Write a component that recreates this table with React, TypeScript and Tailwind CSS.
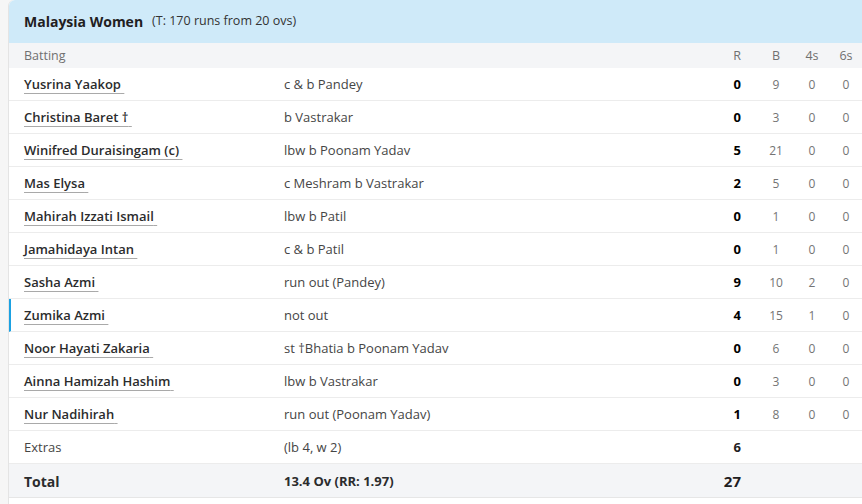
const batters = [
  { name: "Yusrina Yaakop", how: "c & b Pandey", r: 0, b: 9, f: 0, s: 0 },
  { name: "Christina Baret \u2020", how: "b Vastrakar", r: 0, b: 3, f: 0, s: 0 },
  { name: "Winifred Duraisingam (c)", how: "lbw b Poonam Yadav", r: 5, b: 21, f: 0, s: 0 },
  { name: "Mas Elysa", how: "c Meshram b Vastrakar", r: 2, b: 5, f: 0, s: 0 },
  { name: "Mahirah Izzati Ismail", how: "lbw b Patil", r: 0, b: 1, f: 0, s: 0 },
  { name: "Jamahidaya Intan", how: "c & b Patil", r: 0, b: 1, f: 0, s: 0 },
  { name: "Sasha Azmi", how: "run out (Pandey)", r: 9, b: 10, f: 2, s: 0 },
  { name: "Zumika Azmi", how: "not out", r: 4, b: 15, f: 1, s: 0, active: true },
  { name: "Noor Hayati Zakaria", how: "st \u2020Bhatia b Poonam Yadav", r: 0, b: 6, f: 0, s: 0 },
  { name: "Ainna Hamizah Hashim", how: "lbw b Vastrakar", r: 0, b: 3, f: 0, s: 0 },
  { name: "Nur Nadihirah", how: "run out (Poonam Yadav)", r: 1, b: 8, f: 0, s: 0 },
];

export default function App() {
  return (
    <div
      className="h-[504px] w-[862px] overflow-hidden bg-[#f6f6f6] pl-2 text-[13px] text-[#2b2c2d]"
      style={{ fontFamily: '"Open Sans", "Noto Sans", sans-serif' }}
    >
      <div className="h-full rounded-tl-md border-l border-[#e4e4e4] bg-white">
        <div className="flex h-[43px] items-center rounded-tl-md bg-[#cfeaf9] pl-[15px]">
          <span className="text-[14px] font-bold text-[#1f2021]">Malaysia Women</span>
          <span className="ml-[9px] text-[12.5px] text-[#333]">(T: 170 runs from 20 ovs)</span>
        </div>

        <div className="flex h-[25px] items-center bg-[#f4f5f7] pl-[15px] pt-px text-[12.5px] text-[#707070]">
          <span className="flex-1">Batting</span>
          <span className="w-[40px] text-right">R</span>
          <span className="w-[17px]" />
          <span className="w-9 text-center">B</span>
          <span className="w-9 text-center">4s</span>
          <span className="w-8 text-center">6s</span>
        </div>

        {batters.map((p) => (
          <div
            key={p.name}
            className={
              "flex h-[33px] items-center border-b border-[#ececec] pt-[2px] " +
              (p.active ? "border-l-2 border-l-[#1ba1e2] pl-[13px]" : "pl-[15px]")
            }
          >
            <span className="w-[260px] font-semibold">
              <span className="underline decoration-[#a9a9a9] underline-offset-[4px]">
                {p.name}
                {"\u00a0"}
              </span>
            </span>
            <span className="flex-1 text-[#454545]">{p.how}</span>
            <span className="w-[40px] text-right font-bold text-black">{p.r}</span>
            <span className="w-[17px]" />
            <span className="w-9 text-center text-[12px] text-[#747474]">{p.b}</span>
            <span className="w-9 text-center text-[12px] text-[#747474]">{p.f}</span>
            <span className="w-8 text-center text-[12px] text-[#747474]">{p.s}</span>
          </div>
        ))}

        <div className="flex h-[33px] items-center border-b border-[#ececec] pl-[15px] pt-[2px]">
          <span className="w-[260px] text-[#454545]">Extras</span>
          <span className="flex-1 text-[#454545]">(lb 4, w 2)</span>
          <span className="w-[40px] text-right font-bold text-[#1f2021]">6</span>
          <span className="w-[121px]" />
        </div>

        <div className="flex h-[34px] items-center border-b border-[#e6e6e6] bg-[#f4f5f7] pl-[15px] pt-[2px]">
          <span className="w-[260px] text-[14px] font-bold text-[#2b2c2d]">Total</span>
          <span className="flex-1 font-bold text-[#2b2c2d]">13.4 Ov (RR: 1.97)</span>
          <span className="w-[40px] text-right text-[15px] font-bold text-[#1f2021]">27</span>
          <span className="w-[121px]" />
        </div>
      </div>
    </div>
  );
}
